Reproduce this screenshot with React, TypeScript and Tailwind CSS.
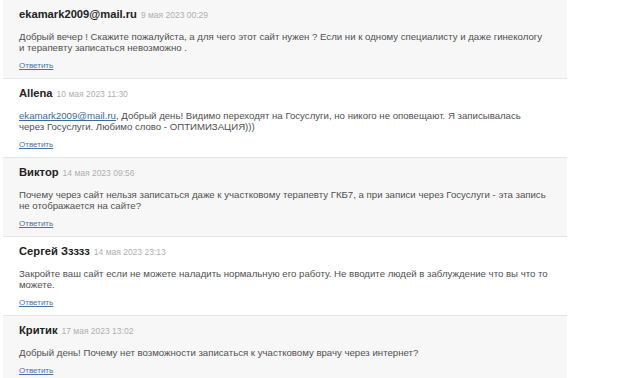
import { type FC } from "react";

interface Comment {
  id: number;
  author: string;
  date: string;
  text: string[];
  mention?: string;
}

const comments: Comment[] = [
  {
    id: 1,
    author: "ekamark2009@mail.ru",
    date: "9 мая 2023 00:29",
    text: [
      "Добрый вечер ! Скажите пожалуйста, а для чего этот сайт нужен ? Если ни к одному специалисту и даже гинекологу",
      "и терапевту записаться невозможно .",
    ],
  },
  {
    id: 2,
    author: "Allena",
    date: "10 мая 2023 11:30",
    mention: "ekamark2009@mail.ru",
    text: [
      ", Добрый день! Видимо переходят на Госуслуги, но никого не оповещают. Я записывалась",
      "через Госуслуги. Любимо слово - ОПТИМИЗАЦИЯ)))",
    ],
  },
  {
    id: 3,
    author: "Виктор",
    date: "14 мая 2023 09:56",
    text: [
      "Почему через сайт нельзя записаться даже к участковому терапевту ГКБ7, а при записи через Госуслуги - эта запись",
      "не отображается на сайте?",
    ],
  },
  {
    id: 4,
    author: "Сергей Ззззз",
    date: "14 мая 2023 23:13",
    text: [
      "Закройте ваш сайт если не можете наладить нормальную его работу. Не вводите людей в заблуждение что вы что то",
      "можете.",
    ],
  },
  {
    id: 5,
    author: "Критик",
    date: "17 мая 2023 13:02",
    text: ["Добрый день! Почему нет возможности записаться к участковому врачу через интернет?"],
  },
];

const CommentCard: FC<{ comment: Comment; shaded: boolean }> = ({ comment, shaded }) => (
  <div
    className={
      shaded
        ? "bg-[#f7f7f7] border-b border-[#e6e6e6] pl-[16px] pt-[8px] pb-[10px]"
        : "bg-white border-b border-[#e6e6e6] pl-[16px] pt-[8px] pb-[10px]"
    }
  >
    <div className="h-[13px] leading-[13px] flex items-baseline gap-[4px]">
      <span className="text-[11.2px] font-bold text-[#222]">{comment.author}</span>
      <span className="text-[8.5px] text-[#b0b0b0]">{comment.date}</span>
    </div>
    <div className="mt-[10px] text-[9.65px] leading-[11px] text-[#505050]">
      {comment.text.map((line, i) => (
        <div key={i} className="whitespace-nowrap">
          {i === 0 && comment.mention && (
            <span className="text-[#3b6aa0] underline">{comment.mention}</span>
          )}
          {line}
        </div>
      ))}
    </div>
    <div className="mt-[4px] h-[11px] leading-[11px]">
      <a className="text-[8px] text-[#4a73a8] underline cursor-pointer">Ответить</a>
    </div>
  </div>
);

export default function App() {
  return (
    <div
      className="w-[640px] h-[378px] bg-white overflow-hidden pl-[3px]"
      style={{ fontFamily: '"Liberation Sans", Arial, sans-serif' }}
    >
      <div className="w-[564px] flex flex-col">
        {comments.map((c, i) => (
          <CommentCard key={c.id} comment={c} shaded={i % 2 === 0} />
        ))}
      </div>
    </div>
  );
}
